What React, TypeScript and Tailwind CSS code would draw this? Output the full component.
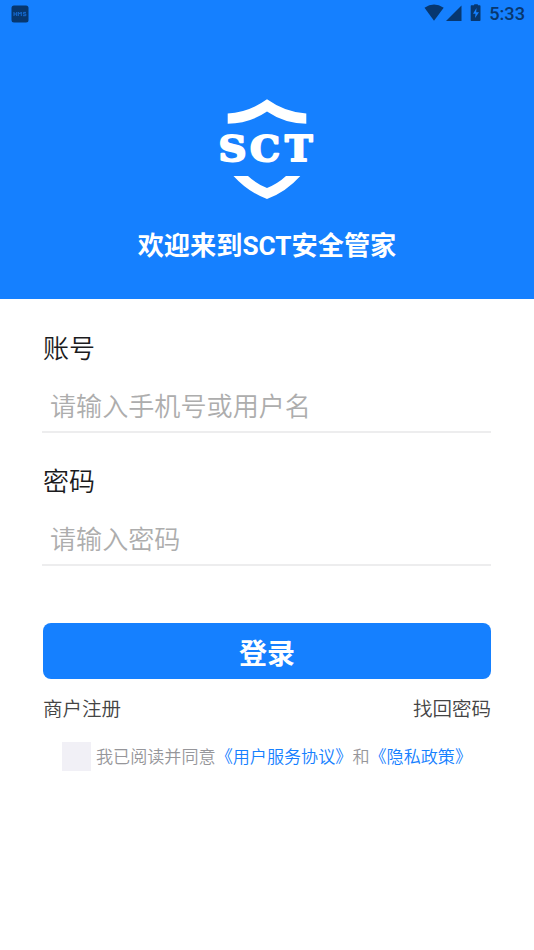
import React, { useState } from 'react';

interface FieldProps {
    label: string;
    type: string;
    placeholder: string;
    value: string;
    onChange: (value: string) => void;
}

const StatusBar: React.FC = () => (
    <div className="flex h-[27px] items-center justify-between pl-[11px] pr-[9px] text-[#07376f]">
        <svg width="18" height="18" viewBox="0 0 18 18">
            <rect x="0.5" y="0.5" width="17" height="17" rx="2.5" fill="currentColor" />
            <path
                d="M3 7v4M5.7 7v4M3 9h2.7M7.3 11V7l1.5 2 1.5-2v4M15 7.4h-2.6v1.6h2.4v1.7H12"
                fill="none"
                stroke="#176bd0"
                strokeWidth="1"
            />
        </svg>
        <div className="flex items-center">
            <svg width="60" height="20" viewBox="0 0 60 20" fill="currentColor" className="mb-px">
                <path d="M1.500 4.800Q11 -1.800 20.700 4.800L11 17.800Z" />
                <path d="M38.500 2.500V18H23Z" />
                <path
                    fillRule="evenodd"
                    d="M52 1.200h2c.7 0 1 .4 1 1h1.500c.7 0 1 .4 1 1V17c0 .7-.4 1-1 1h-7.800c-.7 0-1-.4-1-1V3.200c0-.6.3-1 1-1H51c0-.6.3-1 1-1ZM53.500 5 50 10.800h2.500l-.5 4.200L56 9.200h-2.800Z"
                />
            </svg>
            <span className="ml-[6px] mt-[2px] font-[Roboto] text-[18.2px] font-medium leading-none">5:33</span>
        </div>
    </div>
);

const ShieldLogo: React.FC = () => (
    <svg width="100" height="102" viewBox="217 98 100 102" fill="white" className="mx-auto mt-[71px]">
        <path d="M267 99.300Q285.500 112.500 306.300 113.500V123.700Q284.500 123.500 267 111.500Q249.500 123.500 227.700 123.700V113.500Q248.500 112.500 267 99.300Z" />
        <path d="M233.500 176H248Q256 183.500 267 188Q278 183.500 286 176H300.300Q286 192 267 199Q248 192 233.500 176Z" />
        <g fontFamily="'DejaVu Serif', serif" fontWeight="700" fontSize="35.500" stroke="white" strokeWidth="2" strokeLinejoin="round">
            <text x="218.500" y="160.500" textLength="28" lengthAdjust="spacingAndGlyphs">S</text>
            <text x="250" y="160.500" textLength="30" lengthAdjust="spacingAndGlyphs">C</text>
            <text x="285" y="160.500" textLength="27.500" lengthAdjust="spacingAndGlyphs">T</text>
        </g>
    </svg>
);

const Field: React.FC<FieldProps> = ({ label, type, placeholder, value, onChange }) => (
    <label className="block h-[133px]">
        <span className="block text-[26px] leading-[38px] text-[#1b1b1d]">{label}</span>
        <input
            type={type}
            value={value}
            placeholder={placeholder}
            onChange={e => onChange(e.target.value)}
            className="-ml-px mt-[12px] block h-[53px] w-[449px] border-b-2 border-[#ededee] px-2 pt-[3px] text-[26.1px] text-[#1b1b1d] outline-none placeholder:text-[#adadad]"
        />
    </label>
);

const App: React.FC = () => {
    const [account, setAccount] = useState('');
    const [password, setPassword] = useState('');
    const [agreed, setAgreed] = useState(false);

    return (
        <div className="h-[950px] w-[534px] overflow-hidden bg-white font-[Roboto,'Noto_Sans_CJK_SC',sans-serif] font-[350]">
            <header className="h-[299px] bg-[#1580ff]">
                <StatusBar />
                <ShieldLogo />
                <h1 className="mt-[27px] text-center text-[26.2px] font-bold leading-[38px] text-white">欢迎来到SCT安全管家</h1>
            </header>
            <main className="px-[43px] pt-[31px]">
                <Field label="账号" type="text" placeholder="请输入手机号或用户名" value={account} onChange={setAccount} />
                <Field label="密码" type="password" placeholder="请输入密码" value={password} onChange={setPassword} />
                <button className="mt-[26.5px] block h-[56.5px] w-full rounded-[8px] bg-[#1580ff] pt-[4px] text-[28px] font-bold leading-[56px] text-white">
                    登录
                </button>
                <div className="mt-[17px] flex justify-between text-[19.5px] leading-[28px] text-[#444444]">
                    <a>商户注册</a>
                    <a>找回密码</a>
                </div>
                <div className="mt-[16px] flex items-center pl-[19px] text-[17.1px] leading-[29px] text-[#96969a]">
                    <button
                        aria-label="同意协议"
                        aria-pressed={agreed}
                        onClick={() => setAgreed(!agreed)}
                        className={agreed ? 'mr-[5px] size-[29px] bg-[#1580ff]' : 'mr-[5px] size-[29px] bg-[#f1f0f6]'}
                    />
                    <div className="flex pt-[3px]">
                        <span>我已阅读并同意</span>
                        <a className="text-[#1580ff]">《用户服务协议》</a>
                        <span>和</span>
                        <a className="text-[#1580ff]">《隐私政策》</a>
                    </div>
                </div>
            </main>
        </div>
    );
};

export default App;
